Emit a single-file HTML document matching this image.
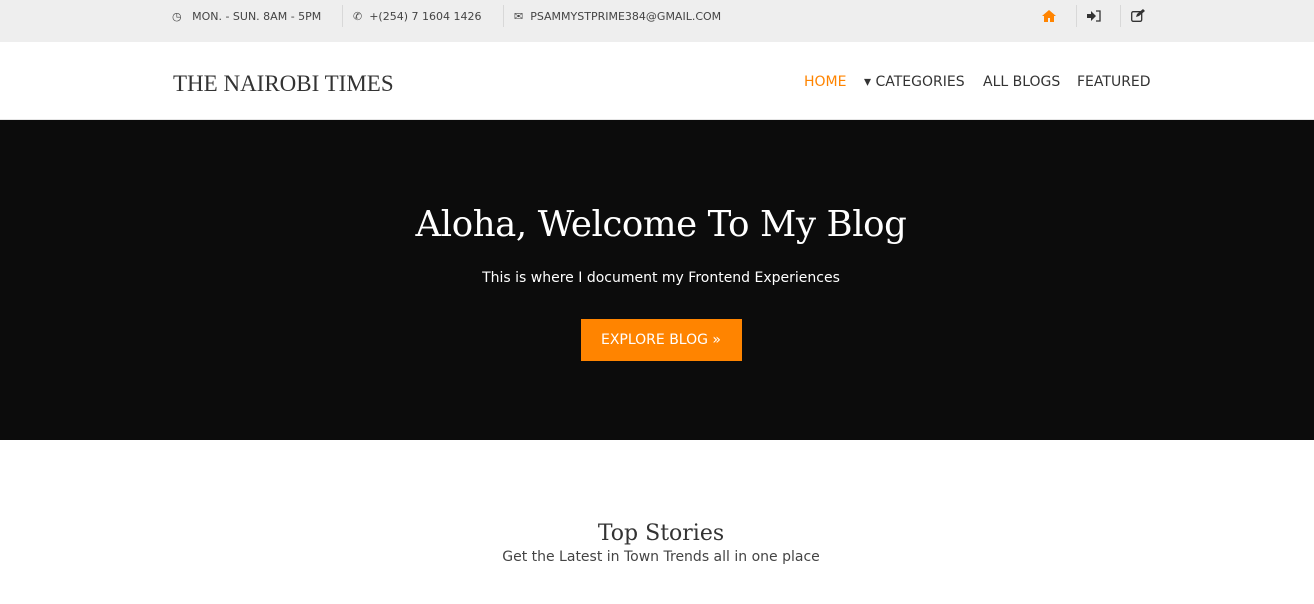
<!DOCTYPE html>
<html><head><meta charset="utf-8"><style>
*{margin:0;padding:0;box-sizing:border-box}
body{width:1314px;height:604px;overflow:hidden;background:#fff;font-family:"DejaVu Sans","Liberation Sans",sans-serif;color:#333}
.top{height:42px;background:#eee;position:relative;font-size:11px;color:#444}
.top span{position:absolute;top:10px}
.sep{position:absolute;top:5px;width:1px;height:22px;background:#d8d8d8}
.hdr{height:78px;position:relative;border-bottom:1px solid #e5e5e5}
.logo{position:absolute;left:173px;font-family:"Liberation Serif",serif;font-size:23px;color:#333}
.nav{position:absolute;font-size:14px;color:#333}
.hero{position:absolute;top:120px;left:0;width:1314px;height:320px;background:#0c0c0c;text-align:center;color:#fff;padding-left:8px}
.hero h1{font-family:"DejaVu Serif","Liberation Serif",serif;font-weight:normal;font-size:35.5px;margin-top:84px;letter-spacing:-0.4px}
.hero p{font-size:14px;margin-top:25px}
.btn{display:inline-block;margin-top:33px;background:#ff8400;color:#fff;font-size:14px;width:161px;height:42px;line-height:42px}
.ts{position:absolute;top:521px;width:1314px;text-align:center;padding-left:8px}
.ts h2{font-family:"DejaVu Serif","Liberation Serif",serif;font-weight:normal;font-size:22px;color:#333}
.ts p{font-size:14px;color:#444;margin-top:3px}
</style></head><body>
<div class="top">
<span style="left:172px">&#9719;&nbsp;&nbsp; MON. - SUN. 8AM - 5PM</span>
<div class="sep" style="left:342px"></div>
<span style="left:353px">&#9990;&nbsp; +(254) 7 1604 1426</span>
<div class="sep" style="left:503px"></div>
<span style="left:514px">&#9993;&nbsp; PSAMMYSTPRIME384@GMAIL.COM</span>
<svg style="position:absolute;left:1042px;top:10px" width="14" height="12" viewBox="0 0 14 12"><path d="M7 0L0 6h2v6h4V8h2v4h4V6h2z" fill="#ff8400"/></svg>
<div class="sep" style="left:1076px"></div>
<svg style="position:absolute;left:1087px;top:10px" width="14" height="12" viewBox="0 0 14 12"><path d="M0 4h4V1l5 5-5 5V8H0z" fill="#333"/><path d="M9 1h4v10H9" fill="none" stroke="#333" stroke-width="1.3"/></svg>
<div class="sep" style="left:1120px"></div>
<svg style="position:absolute;left:1131px;top:9px" width="15" height="13" viewBox="0 0 15 13"><rect x="0.7" y="2.7" width="10" height="9.6" rx="1.5" fill="none" stroke="#333" stroke-width="1.3"/><path d="M5 8l1-3 6-5 2 2-6 5z" fill="#333"/></svg>
</div>
<div class="hdr">
<div class="logo" style="top:29px">THE NAIROBI TIMES</div>
<div class="nav" style="left:804px;top:32px;color:#ff8400">HOME</div>
<div class="nav" style="left:864px;top:32px">&#9662;&nbsp;CATEGORIES</div>
<div class="nav" style="left:983px;top:32px">ALL BLOGS</div>
<div class="nav" style="left:1077px;top:32px">FEATURED</div>
</div>
<div class="hero">
<h1>Aloha, Welcome To My Blog</h1>
<p>This is where I document my Frontend Experiences</p>
<div class="btn">EXPLORE BLOG &raquo;</div>
</div>
<div class="ts">
<h2>Top Stories</h2>
<p>Get the Latest in Town Trends all in one place</p>
</div>
</body></html>
